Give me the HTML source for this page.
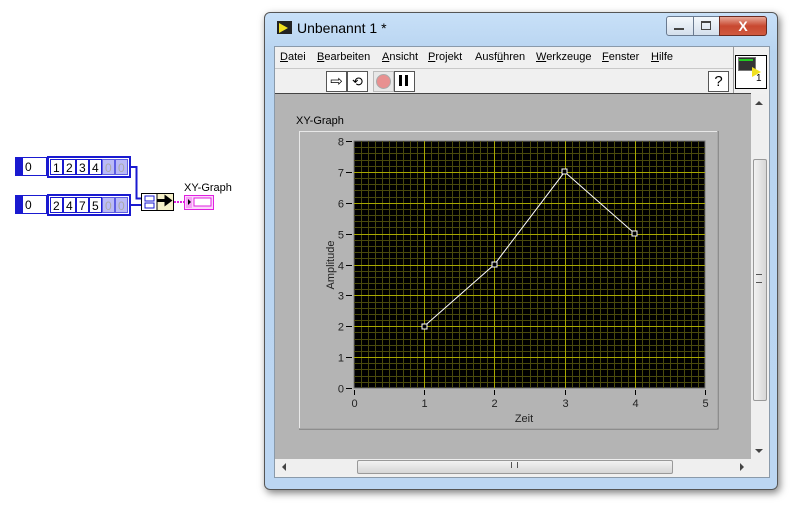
<!DOCTYPE html>
<html><head><meta charset="utf-8"><style>
html,body{margin:0;padding:0;width:800px;height:510px;overflow:hidden;background:#fff;font-family:"Liberation Sans",sans-serif;}
.a{position:absolute;}
.m{position:absolute;top:51px;font-size:11px;color:#000;white-space:nowrap;}
.m u{text-decoration:underline;}
</style></head><body>
<svg class="a" style="left:0;top:0" width="240" height="240">
 <g font-family="Liberation Sans" font-size="12">
 <rect x="15.5" y="157.5" width="31" height="18" fill="#fff" stroke="#1a1ad0" stroke-width="1"/>
 <rect x="16" y="158" width="7" height="17" fill="#1a1ad0"/>
 <text x="25" y="171" fill="#000">0</text>
 <rect x="47" y="156" width="84" height="22" fill="#1a1ad0"/>
 <rect x="49" y="158" width="80" height="18" fill="#fff"/>
 <rect x="50" y="159" width="78" height="16" fill="#1a1ad0"/>
 <g fill="#fff"><rect x="51" y="160" width="11" height="14"/><rect x="64" y="160" width="11" height="14"/><rect x="77" y="160" width="11" height="14"/><rect x="90" y="160" width="11" height="14"/><rect x="103" y="160" width="11" height="14"/><rect x="116" y="160" width="11" height="14"/></g>
 <g fill="#000"><text x="53" y="172">1</text><text x="66" y="172">2</text><text x="79" y="172">3</text><text x="92" y="172">4</text></g>
 <rect x="102" y="159" width="26" height="16" fill="#8c8cf0" opacity=".6"/>
 <g fill="#aaa"><text x="105" y="172">0</text><text x="118" y="172">0</text></g>
 <rect x="15.5" y="195.5" width="31" height="18" fill="#fff" stroke="#1a1ad0" stroke-width="1"/>
 <rect x="16" y="196" width="7" height="17" fill="#1a1ad0"/>
 <text x="25" y="209" fill="#000">0</text>
 <rect x="47" y="194" width="84" height="22" fill="#1a1ad0"/>
 <rect x="49" y="196" width="80" height="18" fill="#fff"/>
 <rect x="50" y="197" width="78" height="16" fill="#1a1ad0"/>
 <g fill="#fff"><rect x="51" y="198" width="11" height="14"/><rect x="64" y="198" width="11" height="14"/><rect x="77" y="198" width="11" height="14"/><rect x="90" y="198" width="11" height="14"/><rect x="103" y="198" width="11" height="14"/><rect x="116" y="198" width="11" height="14"/></g>
 <g fill="#000"><text x="53" y="210">2</text><text x="66" y="210">4</text><text x="79" y="210">7</text><text x="92" y="210">5</text></g>
 <rect x="102" y="197" width="26" height="16" fill="#8c8cf0" opacity=".6"/>
 <g fill="#aaa"><text x="105" y="210">0</text><text x="118" y="210">0</text></g>
 <path d="M131 167 H136.5 V198.5 H141" fill="none" stroke="#1a1ad0" stroke-width="2"/>
 <path d="M131 205 H141" fill="none" stroke="#1a1ad0" stroke-width="2"/>
 <rect x="141.5" y="193.5" width="32" height="17" fill="#fff" stroke="#000"/>
 <rect x="157" y="194" width="16" height="16" fill="#f6f1c8"/>
 <line x1="157" y1="194" x2="157" y2="210" stroke="#000"/>
 <rect x="145" y="196" width="9" height="5" fill="none" stroke="#1a1ad0"/>
 <rect x="145" y="203" width="9" height="5" fill="none" stroke="#1a1ad0"/>
 <path d="M157 200.5 H168 M166 197.5 L170 200.5 L166 203.5Z" stroke="#000" stroke-width="3" fill="#000"/>
 <path d="M174 202 H184" stroke="#e020e0" stroke-width="2" stroke-dasharray="2,1"/>
 <text x="184" y="191" fill="#000" font-size="11">XY-Graph</text>
 <rect x="184.5" y="195.5" width="29" height="14" fill="#fbd7fb" stroke="#e020e0"/>
 <rect x="186" y="197" width="6" height="11" fill="#f7a0f7"/>
 <path d="M188 199 L191 202 L188 205Z" fill="#000"/>
 <rect x="194" y="198" width="17" height="8" fill="#fff" stroke="#e020e0"/>
 </g>
</svg>

<div class="a" style="left:264px;top:12px;width:512px;height:476px;border-radius:6px;background:linear-gradient(#c8e0f8,#b8d4f0 40px,#bcd6f2);box-shadow:2px 3px 8px rgba(0,0,0,.5);border:1px solid #555;"></div>
<div class="a" style="left:277px;top:21px;width:15px;height:13px;background:#222;"></div>
<div class="a" style="left:279px;top:23px;width:0;height:0;border-left:9px solid #f0e020;border-top:5px solid transparent;border-bottom:5px solid transparent;"></div>
<div class="a" style="left:297px;top:20px;font-size:14px;color:#000;">Unbenannt 1 *</div>
<div class="a" style="left:666px;top:16px;width:26px;height:18px;border:1px solid #6a7a90;border-radius:3px 0 0 3px;background:linear-gradient(#f4f8fc,#d4dfec);"></div>
<div class="a" style="left:674px;top:28px;width:10px;height:2px;background:#444;"></div>
<div class="a" style="left:693px;top:16px;width:25px;height:18px;border:1px solid #6a7a90;background:linear-gradient(#f4f8fc,#d4dfec);"></div>
<div class="a" style="left:701px;top:21px;width:8px;height:6px;border:1px solid #444;border-top-width:2px;"></div>
<div class="a" style="left:719px;top:16px;width:46px;height:18px;border:1px solid #6a2a20;border-radius:0 3px 3px 0;background:linear-gradient(#e8a898,#c84830 50%,#d05a40);color:#fff;font-weight:bold;font-size:14px;text-align:center;line-height:18px;">X</div>
<div class="a" style="left:274px;top:46px;width:494px;height:430px;background:#f0f0f0;border:1px solid #8a9aaa;"></div>
<div class="m" style="left:280px"><u>D</u>atei</div>
<div class="m" style="left:317px"><u>B</u>earbeiten</div>
<div class="m" style="left:382px"><u>A</u>nsicht</div>
<div class="m" style="left:428px"><u>P</u>rojekt</div>
<div class="m" style="left:475px">Ausf<u>ü</u>hren</div>
<div class="m" style="left:536px"><u>W</u>erkzeuge</div>
<div class="m" style="left:602px"><u>F</u>enster</div>
<div class="m" style="left:651px"><u>H</u>ilfe</div>
<div class="a" style="left:275px;top:68px;width:458px;height:1px;background:#c8c8c8;"></div>
<div class="a" style="left:326px;top:71px;width:19px;height:19px;border:1px solid #555;background:#fff;font-size:15px;text-align:center;line-height:19px;">⇨</div>
<div class="a" style="left:347px;top:71px;width:19px;height:19px;border:1px solid #555;background:#fff;font-size:13px;text-align:center;line-height:19px;">⟲</div>
<div class="a" style="left:373px;top:71px;width:19px;height:19px;border:1px solid #bbb;background:#e8e8e8;"></div>
<div class="a" style="left:376px;top:74px;width:13px;height:13px;border-radius:50%;background:#e89090;border:1px solid #aaa;"></div>
<div class="a" style="left:394px;top:71px;width:19px;height:19px;border:1px solid #555;background:#fff;"></div>
<div class="a" style="left:399px;top:75px;width:3px;height:11px;background:#000;"></div>
<div class="a" style="left:405px;top:75px;width:3px;height:11px;background:#000;"></div>
<div class="a" style="left:708px;top:71px;width:19px;height:19px;border:1px solid #555;background:#fff;font-size:15px;text-align:center;line-height:19px;color:#000;">?</div>
<div class="a" style="left:733px;top:47px;width:35px;height:46px;background:#f0f0f0;border-left:1px solid #999;"></div>
<div class="a" style="left:735px;top:55px;width:30px;height:32px;background:#fff;border:1px solid #000;"></div>
<div class="a" style="left:738px;top:57px;width:16px;height:12px;background:#333;border:1px solid #777;"></div>
<div class="a" style="left:739px;top:59px;width:14px;height:6px;border-top:2px solid #2c2;"></div>
<div class="a" style="left:752px;top:67px;width:0;height:0;border-left:9px solid #f0e020;border-top:5px solid transparent;border-bottom:5px solid transparent;"></div>
<div class="a" style="left:756px;top:73px;font-size:10px;color:#000;">1</div>
<div class="a" style="left:275px;top:93px;width:476px;height:366px;background:#b4b4b4;border-top:1px solid #444;"></div>
<div class="a" style="left:751px;top:94px;width:16px;height:365px;background:#efefef;"></div>
<div class="a" style="left:753px;top:159px;width:12px;height:240px;border:1px solid #999;border-radius:2px;background:linear-gradient(90deg,#f2f2f2,#d6d6d6);"></div>
<div class="a" style="left:755px;top:101px;width:0;height:0;border-left:4px solid transparent;border-right:4px solid transparent;border-bottom:4px solid #444;"></div>
<div class="a" style="left:755px;top:449px;width:0;height:0;border-left:4px solid transparent;border-right:4px solid transparent;border-top:4px solid #444;"></div>
<div class="a" style="left:756px;top:274px;width:6px;height:7px;border-top:1px solid #555;border-bottom:1px solid #555;"></div>
<div class="a" style="left:275px;top:459px;width:492px;height:16px;background:#efefef;"></div>
<div class="a" style="left:357px;top:460px;width:314px;height:12px;border:1px solid #999;border-radius:2px;background:linear-gradient(#f2f2f2,#d6d6d6);"></div>
<div class="a" style="left:282px;top:463px;width:0;height:0;border-top:4px solid transparent;border-bottom:4px solid transparent;border-right:4px solid #444;"></div>
<div class="a" style="left:740px;top:463px;width:0;height:0;border-top:4px solid transparent;border-bottom:4px solid transparent;border-left:4px solid #444;"></div>
<div class="a" style="left:511px;top:462px;width:5px;height:6px;border-left:1px solid #555;border-right:1px solid #555;"></div>

<div class="a" style="left:296px;top:115px;font-size:11px;color:#000;">XY-Graph</div>
<svg class="a" style="left:0;top:0" width="800" height="510">
 <rect x="299.5" y="131.5" width="418" height="297" fill="none" stroke="#e8e8e8"/>
 <path d="M718 131 V429 H299" fill="none" stroke="#666"/>
 <rect x="354" y="141" width="351" height="247" fill="#000" stroke="#777"/>
 <g id="grid"></g>
 <polyline points="424.2,326.25 494.4,264.5 564.6,171.9 634.8,233.6" fill="none" stroke="#fff" stroke-width="1"/>
 <g fill="#000" stroke="#fff"><rect x="422" y="324" width="5" height="5"/><rect x="492" y="262" width="5" height="5"/><rect x="562" y="169" width="5" height="5"/><rect x="632" y="231" width="5" height="5"/></g>
 <g id="ax" font-family="Liberation Sans" font-size="11" fill="#222"></g>
 <text x="524" y="422" font-family="Liberation Sans" font-size="11" fill="#222" text-anchor="middle">Zeit</text>
 <text transform="translate(334,265) rotate(-90)" font-family="Liberation Sans" font-size="11" fill="#222" text-anchor="middle">Amplitude</text>
</svg>
<script>
var g=document.getElementById('grid'),s='',x0=354,y0=388,dx=70.2,dy=30.875;
for(var i=1;i<50;i++){var x=Math.round(x0+i*dx/10)+.5;if(i%10)s+='<line x1="'+x+'" y1="141" x2="'+x+'" y2="388" stroke="#4a4a0c"/>';}
for(var j=1;j<40;j++){var y=Math.round(y0-j*dy/5)+.5;if(j%5)s+='<line x1="354" y1="'+y+'" x2="705" y2="'+y+'" stroke="#4a4a0c"/>';}
for(i=1;i<5;i++){var x=Math.round(x0+i*dx)+.5;s+='<line x1="'+x+'" y1="141" x2="'+x+'" y2="388" stroke="#a8a800"/>';}
for(j=1;j<8;j++){var y=Math.round(y0-j*dy)+.5;s+='<line x1="354" y1="'+y+'" x2="705" y2="'+y+'" stroke="#a8a800"/>';}
g.innerHTML=s;
var a='';
for(i=0;i<=5;i++){var x=Math.round(x0+i*dx)+.5;a+='<line x1="'+x+'" y1="390" x2="'+x+'" y2="395" stroke="#000"/><text x="'+x+'" y="407" text-anchor="middle">'+i+'</text>';}
for(j=0;j<=8;j++){var y=Math.round(y0-j*dy)+.5;a+='<line x1="346" y1="'+y+'" x2="352" y2="'+y+'" stroke="#000"/><text x="344" y="'+(y+4)+'" text-anchor="end">'+j+'</text>';}
document.getElementById('ax').innerHTML=a;
</script>
</body></html>
